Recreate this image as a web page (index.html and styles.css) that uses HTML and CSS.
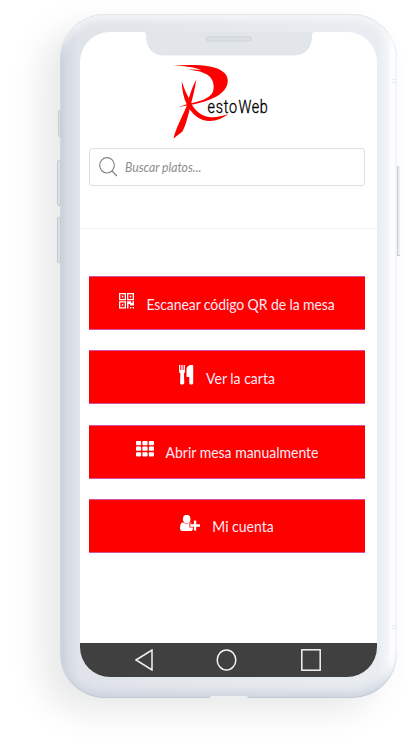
FILE: index.html
```html
<!DOCTYPE html>
<html lang="es">
<head>
<meta charset="utf-8">
<title>RestoWeb</title>
<link rel="stylesheet" href="styles.css">
</head>
<body>
<div class="phone">
  <i class="key key-mute"></i><i class="key key-up"></i><i class="key key-down"></i><i class="key-power"></i>
  <i class="seam seam-top"></i><i class="seam seam-bottom"></i><i class="port"></i>
  <svg class="notch" width="172" height="24" viewBox="0 0 172 24"><path d="M0 0H172C169.500 0 169 2 169 4C169 16 162 23.500 151 23.500H21C10 23.500 3 16 3 4C3 2 2.500 0 0 0Z" fill="#e2e6eb"/><rect x="63.500" y="5" width="45" height="4" rx="2" fill="#dce0e5" stroke="#ccd1d8"/></svg>
  <main class="screen">
    <header class="header">
      <svg class="logo" width="110" height="76" viewBox="172 64 110 76" role="img" aria-label="RestoWeb">
        <path fill="#f00" d="M173 65.600C186 64.700 200 64.800 210 66.500C221 68.500 227.800 73.500 227.800 80.500C227.800 90 219 96 210 99.500C203 102.200 195 104.300 189.500 105L178 107.300L189 103.500C201 101.500 208 98.500 212 93.500C215 88.500 214 80 209 76C204 72 197 70.500 188 69.800C193 69.300 197 69.500 201 70C195 67.500 186 66.200 173 65.600Z"/>
        <path fill="#f00" d="M181.700 81C184 89 187 94 190 101C194 110 201 116.500 211 117.300C217 117.500 223 116 228.500 114C220 120.500 211 122.500 203 120C195 117 190 110.500 187 105C183.500 98 182 90 181.700 81Z"/>
        <path fill="#f00" d="M196.300 79.500C195 89 192.500 98 190.500 106C188.500 114 186 125 182.500 131.500L173.500 138.500C176 128 181.500 118 186.500 106.500C189 98 191 89 196.300 79.500Z"/>
        <g transform="scale(.82 1)">
          <text class="wordmark" x="253.200" y="113" textLength="36" lengthAdjust="spacing">esto</text>
          <text class="wordmark" x="291" y="113" textLength="35.500" lengthAdjust="spacing">Web</text>
        </g>
      </svg>
      <div class="search">
        <svg width="19" height="20" viewBox="0 0 19 20" fill="none" stroke="#858585" stroke-width="1.200"><ellipse cx="8" cy="8.300" rx="7.300" ry="7.700"/><path d="M13 14L18 19"/></svg>
        <span class="placeholder">Buscar platos...</span>
      </div>
    </header>
    <nav class="actions">
      <a class="action">
        <svg width="15" height="16" viewBox="0 0 15 16" fill="#fff"><path fill-rule="evenodd" d="M0 0H7V7.300H0ZM1.300 1.300V6H5.700V1.300ZM8 0H15V7.300H8ZM9.300 1.300V6H13.700V1.300ZM0 8.300H7V15.500H0ZM1.300 9.600V14.200H5.700V9.600ZM2.800 2.800H4.300V4.500H2.800ZM10.800 2.800H12.300V4.500H10.800ZM2.800 11H4.300V12.700H2.800ZM8 8.300H12V9.800H13.500V8.300H15V12.500H11V11H9.500V15.500H8ZM11 14H12.300V15.500H11ZM13.700 14H15V15.500H13.700Z"/></svg>
        <span class="label label-qr">Escanear código QR de la mesa</span></a>
      <a class="action">
        <svg width="15" height="20" viewBox="0 0 15 20" fill="#fff"><path d="M0 0H1V5H1.700V0H2.700V5H3.400V0H4.400V5H5.100V0H6V6C6 7.500 5.500 8 4.900 8.500L5.300 18C5 20 1.100 20 1.100 18L1.400 8.500C.6 8 0 7.500 0 6ZM10 .5C11.500 0 13 0 14.200 .2V18C14.200 20 10.300 20 10.300 18V12H7.500V5C7.500 2.500 8.500 1.200 10 .5Z"/></svg>
        <span class="label">Ver la carta</span></a>
      <a class="action">
        <svg width="18" height="16" viewBox="0 0 18 16" fill="#fff"><rect width="5.200" height="4.200" rx=".8"/><rect x="6.400" width="5.200" height="4.200" rx=".8"/><rect x="12.800" width="5.200" height="4.200" rx=".8"/><rect y="5.600" width="5.200" height="4.200" rx=".8"/><rect x="6.400" y="5.600" width="5.200" height="4.200" rx=".8"/><rect x="12.800" y="5.600" width="5.200" height="4.200" rx=".8"/><rect y="11.200" width="5.200" height="4.200" rx=".8"/><rect x="6.400" y="11.200" width="5.200" height="4.200" rx=".8"/><rect x="12.800" y="11.200" width="5.200" height="4.200" rx=".8"/></svg>
        <span class="label">Abrir mesa manualmente</span></a>
      <a class="action">
        <svg width="20" height="17" viewBox="0 0 20 17"><path d="M0 13C0 9.500 1 7.500 3 7.500C5 9 8 9 10 7.500C12 7.500 13 9.500 13 13C13 15 12 16 11 16H2C1 16 0 15 0 13Z" fill="#fff"/><ellipse cx="6.700" cy="4" rx="3.800" ry="4.200" fill="#fff"/><path d="M9.400 8.300H13.100V4.500H17V8.300H21V12.500H17V16.500H13.100V12.500H9.400Z" fill="#f00"/><path d="M10.200 9.300H13.900V5.500H16.200V9.300H20V11.700H16.200V15.500H13.900V11.700H10.200Z" fill="#fff"/></svg>
        <span class="label">Mi cuenta</span></a>
    </nav>
    <footer class="system">
      <svg width="18" height="22" viewBox="0 0 18 22"><path d="M1 11L17 1V21Z"/></svg>
      <svg width="21" height="22" viewBox="0 0 21 22"><ellipse cx="10.500" cy="11" rx="9.300" ry="10"/></svg>
      <svg width="20" height="22" viewBox="0 0 20 22"><rect x=".8" y=".8" width="18.400" height="20.400"/></svg>
    </footer>
  </main>
</div>
</body>
</html>
```
FILE: styles.css
```css
* { box-sizing: border-box; }
body { display: flow-root; height: 745px; margin: 0; background: #fff; overflow: hidden; font-family: Lato, sans-serif; }
svg { display: block; flex: none; }
.phone {
  position: relative;
  width: 337px;
  height: 684px;
  margin: 14px 0 0 60px;
  padding: 18px 20px 21px;
  border-radius: 45px;
  background: linear-gradient(90deg, #bfc8d3 0, #cbd2dc 4px, #d4dae2 6px, #e0e4ea 19px, #e5e9ee 50%, #e9edf1 318px, #f4f6f8 328px, #fff 332px, #f9fafb 337px);
  box-shadow: inset 0 1px 1px #e1e5e9, inset 0 7px 9px -2px rgba(248,250,252,.85), inset 0 -1px 1px #c3cad5, inset 0 -12px 10px -6px rgba(195,203,216,.7), -18px 14px 32px 0 rgba(75,85,85,.13);
}
.screen {
  display: flex;
  flex-direction: column;
  height: 645px;
  overflow: hidden;
  border-radius: 30px;
  background: #fff;
}
.notch { position: absolute; left: 83px; top: 18px; }
.header {
  display: flex;
  flex-direction: column;
  height: 197px;
  padding: 32px 12px 0 9px;
  border-bottom: 1px solid #f2f2f3;
}
.logo { margin-left: 83px; }
.wordmark { font: 300 17.5px Roboto, sans-serif; fill: #000; stroke: #000; stroke-width: .35px; }
.search {
  display: flex;
  align-items: center;
  gap: 7px;
  height: 38px;
  margin-top: 8px;
  padding-left: 9px;
  border: 1px solid #dedfe0;
  border-radius: 3px;
}
.placeholder { font-size: 12.2px; font-style: italic; color: #8c8c8c; transform: translateY(-.5px) scaleY(1.12); }
.actions {
  display: grid;
  grid-auto-rows: 54px;
  row-gap: 20.15px;
  padding: 47.3px 12px 0 9px;
}
.action {
  display: flex;
  align-items: center;
  justify-content: center;
  gap: 12px;
  border: 1px solid #d3549b;
  border-width: 1px 0;
  background: #f00;
  color: #fbe9f5;
}
.action svg { margin-bottom: 5px; }
.label { font-size: 14px; white-space: nowrap; transform: translateY(.2px) scaleY(1.08); }
.label-qr { letter-spacing: -.09px; }
.system {
  display: grid;
  grid-template-columns: 18px 21px 20px;
  column-gap: 63.5px;
  align-items: center;
  height: 34px;
  margin-top: auto;
  padding-left: 54.500px;
  background: #404040;
}
.system svg { fill: none; stroke: #f2f2f2; stroke-width: 1.5; }
.key { position: absolute; left: -3px; width: 4px; border: 1px solid #c3cad4; border-radius: 2px; background: #dce1e7; }
.key-mute { top: 96px; left: -2px; height: 27px; width: 3px; }
.key-up { top: 146px; height: 46px; }
.key-down { top: 203px; height: 46px; }
.key-power { position: absolute; right: -3px; top: 152px; width: 3px; height: 90px; border-left: 1px solid #c7cdd5; border-bottom: 1px solid #bfc6cf; background: #eceff2; }
.seam { position: absolute; right: 0; width: 5px; height: 4px; border: solid #e8ebef; border-width: 1px 0; }
.seam-top { top: 65px; }
.seam-bottom { bottom: 69px; }
.port { position: absolute; left: 150px; bottom: 0; width: 38px; height: 2px; border-radius: 2px 2px 0 0; background: #edf0f3; }
```
